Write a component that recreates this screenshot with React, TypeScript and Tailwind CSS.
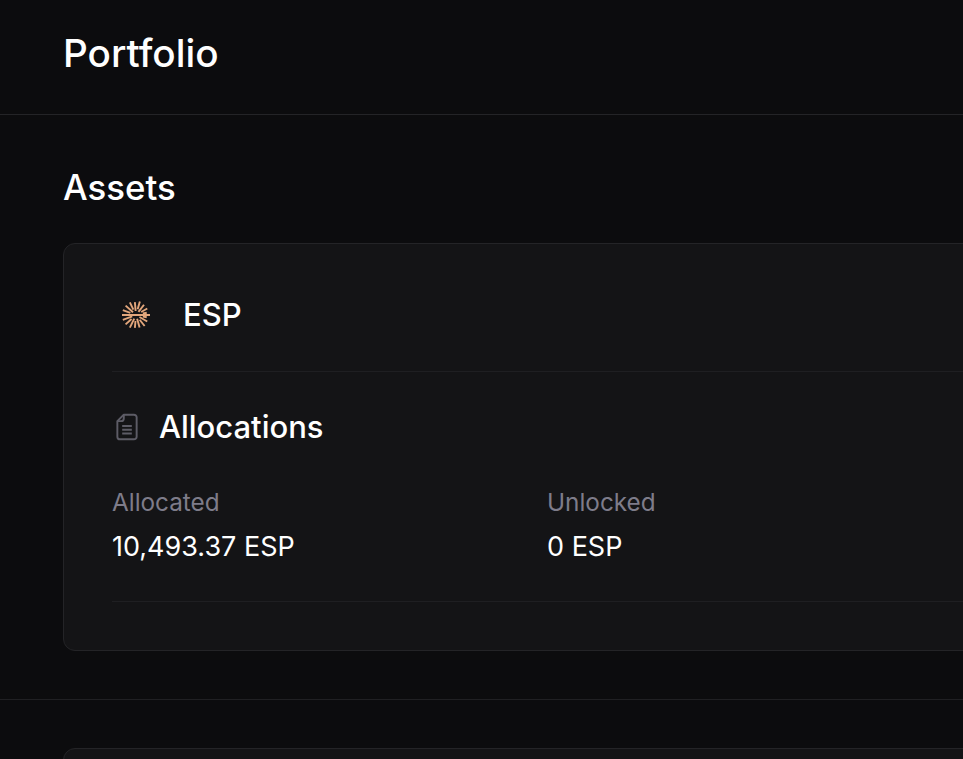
const INTER = "font-['Inter',sans-serif]";

// angle, inner radius, outer radius for each ray of the logo
const RAYS: [number, number, number][] = [
  [-160, 6, 14], [-138, 4, 14], [-116, 6, 14], [-95, 4, 13], [-74, 6, 14], [-52, 4, 13], [-30, 6, 13], [-12, 7, 11],
  [160, 4, 14], [138, 6, 14], [116, 4, 14], [95, 6, 13], [74, 4, 13], [52, 6, 14], [30, 4, 13], [12, 7, 11],
];

function SunLogo() {
  return (
    <svg width="32" height="32" viewBox="0 0 32 32" fill="none">
      {RAYS.map(([deg, inner, outer]) => {
        const rad = (deg * Math.PI) / 180;
        return (
          <line
            key={deg}
            x1={16 + inner * Math.cos(rad)}
            y1={16 + inner * Math.sin(rad)}
            x2={16 + outer * Math.cos(rad)}
            y2={16 + outer * Math.sin(rad)}
            stroke="#e3a77c"
            strokeWidth="1.9"
          />
        );
      })}
      <line x1="2" y1="16" x2="30" y2="16" stroke="#e3a77c" strokeWidth="2" />
    </svg>
  );
}

function FileIcon() {
  return (
    <svg width="26" height="30" viewBox="0 0 24 28" fill="none" stroke="#5d5c66" strokeWidth="1.8" strokeLinejoin="round">
      <path d="M9 2.5h9.5a2.5 2.5 0 0 1 2.5 2.5v18a2.5 2.5 0 0 1-2.5 2.5h-13A2.5 2.5 0 0 1 3 23V8.5z" />
      <path d="M9 2.5V6a2.5 2.5 0 0 1-2.5 2.5H3" />
      <path d="M7.5 13h9M7.5 16.5h9M7.5 20h9" />
    </svg>
  );
}

export default function App() {
  return (
    <div className={`h-[759px] w-[963px] overflow-hidden bg-[#0c0c0e] text-white ${INTER}`}>
      {/* Page title */}
      <div className="flex h-[115px] items-start border-b border-[#242427] pl-[63px] pt-[28px]">
        <h1 className="text-[38.7px] font-medium leading-[50px]">Portfolio</h1>
      </div>

      {/* Assets */}
      <section className="border-b border-[#202023] pb-[48px] pl-[63px] pt-[49px]">
        <h2 className="text-[34.8px] font-medium leading-[46px]">Assets</h2>
        <div className="mt-[33px] h-[408px] w-[1400px] rounded-xl border border-[#242427] bg-[#141416] px-12">
          <div className="flex h-[128px] items-center gap-[31px] border-b border-[#1f1f22] pl-2 pt-[14px]">
            <SunLogo />
            <span className="text-[31px] font-medium leading-[44px]">ESP</span>
          </div>
          <div className="mt-[33px] flex items-center gap-[19px] pl-[2px]">
            <FileIcon />
            <h3 className="text-[31px] font-medium leading-[44px]">Allocations</h3>
          </div>
          <div className="mt-[36px] grid w-[870px] grid-cols-2">
            <div>
              <p className="text-[24.3px] leading-[34px] text-[#7e7c8a]">Allocated</p>
              <p className="mt-[11px] text-[27px] leading-[34px]">10,493.37 ESP</p>
            </div>
            <div>
              <p className="text-[24.3px] leading-[34px] text-[#7e7c8a]">Unlocked</p>
              <p className="mt-[11px] text-[27px] leading-[34px]">0 ESP</p>
            </div>
          </div>
          <div className="mt-[37px] border-b border-[#1f1f22]" />
        </div>
      </section>

      {/* Next card, cut off by the window */}
      <div className="ml-[63px] mt-[48px] h-[200px] w-[1400px] rounded-xl border border-[#242427] bg-[#141416]" />
    </div>
  );
}
